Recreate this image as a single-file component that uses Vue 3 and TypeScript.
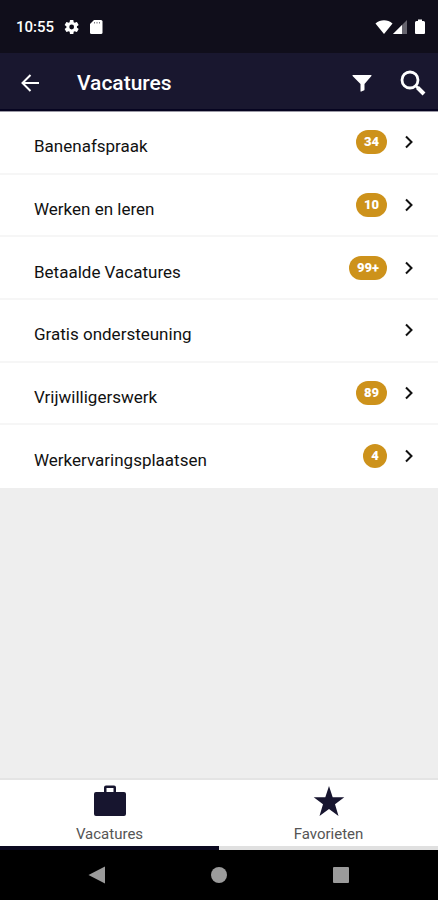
<script setup lang="ts">
import { ref } from 'vue'

interface Category {
  name: string
  count?: string
}

const categories: Category[] = [
  { name: 'Banenafspraak', count: '34' },
  { name: 'Werken en leren', count: '10' },
  { name: 'Betaalde Vacatures', count: '99+' },
  { name: 'Gratis ondersteuning' },
  { name: 'Vrijwilligerswerk', count: '89' },
  { name: 'Werkervaringsplaatsen', count: '4' },
]

const activeTab = ref<'vacatures' | 'favorieten'>('vacatures')
</script>

<template>
  <div class="screen">
    <div class="status">
      <span class="clock">10:55</span>
      <svg class="gear" width="16" height="16" viewBox="0 0 24 24">
        <path fill="currentColor" fill-rule="evenodd" d="M19.4 13a7.600 7.600 0 0 0 0-2l2.300-1.700a.6.6 0 0 0 .1-.7l-2.200-3.800a.6.6 0 0 0-.7-.2l-2.700 1.100a8 8 0 0 0-1.700-1l-.4-2.800a.6.6 0 0 0-.6-.5H9.500a.6.6 0 0 0-.6.500l-.4 2.800a8 8 0 0 0-1.700 1L4.100 4.600a.6.6 0 0 0-.7.2L1.200 8.600a.6.6 0 0 0 .1.700L3.600 11a7.600 7.600 0 0 0 0 2l-2.300 1.700a.6.6 0 0 0-.1.700l2.200 3.800c.1.200.4.300.7.200l2.700-1.100a8 8 0 0 0 1.700 1l.4 2.800c0 .3.300.5.6.500h4c.3 0 .6-.2.6-.5l.4-2.800a8 8 0 0 0 1.700-1l2.700 1.100c.3.100.6 0 .7-.2l2.200-3.800a.6.6 0 0 0-.1-.7zM11.500 15.600a3.600 3.600 0 1 1 0-7.200 3.600 3.600 0 0 1 0 7.200z" />
      </svg>
      <svg class="card" width="14" height="16" viewBox="0 0 14 16">
        <path fill="currentColor" d="M5 1h7a1.500 1.500 0 0 1 1.500 1.500v11A1.500 1.500 0 0 1 12 15H2.500A1.500 1.500 0 0 1 1 13.500V5z" />
        <path stroke="#77757c" stroke-width="1" d="M5.500 3v1.500M8 3v1.500M10.500 3v1.500" />
      </svg>
      <div class="signals">
        <svg width="18" height="16" viewBox="0 0 18 16">
          <path fill="currentColor" d="M9 15 .5 4.500C3 2.300 6 1.300 9 1.300s6 1 8.500 3.200z" />
        </svg>
        <svg width="15" height="16" viewBox="0 0 15 16">
          <path fill="#66646e" d="M14 1v14H0z" />
          <path fill="currentColor" d="M9 6v9H0z" />
        </svg>
        <svg class="battery" width="12" height="16" viewBox="0 0 12 16">
          <path fill="currentColor" d="M4 .5h4v1.500h1.500a1.500 1.500 0 0 1 1.500 1.500v10.500a1 1 0 0 1-1 1H2a1 1 0 0 1-1-1V3.500A1.500 1.500 0 0 1 2.500 2H4z" />
        </svg>
      </div>
    </div>

    <header class="appbar">
      <button class="icon-button" type="button" aria-label="Terug">
        <svg width="20" height="20" viewBox="0 0 20 20" fill="none" stroke="currentColor" stroke-width="2">
          <path d="M19 10H3M10.500 2 2.500 10l8 8" />
        </svg>
      </button>
      <h1>Vacatures</h1>
      <button class="icon-button filter" type="button" aria-label="Filter">
        <svg width="20" height="18" viewBox="0 0 20 18">
          <path fill="currentColor" d="M.8 1h18.400q.6.500.2 1L12.500 10v5.500q0 .8-.8 1.100l-2.400 1q-.8.200-.8-.6V10L.600 2q-.4-.5.2-1z" />
        </svg>
      </button>
      <button class="icon-button" type="button" aria-label="Zoeken">
        <svg width="26" height="26" viewBox="0 0 26 26" fill="none" stroke="currentColor">
          <circle cx="10" cy="10" r="8" stroke-width="2.800" />
          <path stroke-width="2.500" d="M15.500 15.500 18 18" />
          <path stroke-width="4" d="m17.500 17.500 6.500 6.500" />
        </svg>
      </button>
    </header>

    <main>
      <ul class="list">
        <li v-for="category in categories" :key="category.name">
          <a href="#" class="row" @click.prevent>
            <span class="name">{{ category.name }}</span>
            <span v-if="category.count" class="badge">{{ category.count }}</span>
            <svg class="chevron" width="10" height="14" viewBox="0 0 10 14" fill="none" stroke="currentColor" stroke-width="2">
              <path d="m2 1.500 5.500 5.500L2 12.500" />
            </svg>
          </a>
        </li>
      </ul>
    </main>

    <nav class="tabs">
      <button type="button" class="tab" :class="{ active: activeTab === 'vacatures' }" @click="activeTab = 'vacatures'">
        <svg width="34" height="34" viewBox="0 0 34 34">
          <path fill="currentColor" fill-rule="evenodd" d="M11 8V3.500A2 2 0 0 1 13 1.500h8a2 2 0 0 1 2 2V8h8a2 2 0 0 1 2 2v20a2 2 0 0 1-2 2H3a2 2 0 0 1-2-2V10a2 2 0 0 1 2-2zM13.500 8h7V4h-7z" />
        </svg>
        <span>Vacatures</span>
      </button>
      <button type="button" class="tab" :class="{ active: activeTab === 'favorieten' }" @click="activeTab = 'favorieten'">
        <svg width="34" height="34" viewBox="0 0 34 34">
          <path fill="currentColor" d="m17 2 3.700 11.300H32.300l-9.300 7L26.500 32 17 25 7.500 32l3.500-11.700-9.300-7h11.600z" />
        </svg>
        <span>Favorieten</span>
      </button>
    </nav>

    <div class="system">
      <button type="button" aria-label="Systeem terug">
        <svg width="20" height="20" viewBox="0 0 20 20"><path fill="currentColor" d="M18 1.500v17L1.500 10z" /></svg>
      </button>
      <button type="button" aria-label="Startscherm">
        <svg width="20" height="20" viewBox="0 0 20 20"><circle fill="currentColor" cx="10" cy="10" r="8" /></svg>
      </button>
      <button type="button" aria-label="Recente apps">
        <svg width="20" height="20" viewBox="0 0 20 20"><rect fill="currentColor" x="2" y="2" width="16" height="16" rx="1" /></svg>
      </button>
    </div>
  </div>
</template>

<style>
body {
  margin: 0;
}
</style>

<style scoped>
.screen {
  display: flex;
  flex-direction: column;
  min-height: 100vh;
  background: #eeeeee;
  color: #111111;
  font-family: Roboto, "Liberation Sans", sans-serif;
}

svg {
  display: block;
  flex: none;
}

button {
  margin: 0;
  padding: 0;
  border: 0;
  background: none;
  color: inherit;
  font: inherit;
  cursor: pointer;
}

.status {
  display: flex;
  align-items: center;
  height: 53px;
  padding: 0 12px 0 16px;
  background: #100e1b;
  color: #ffffff;
}

.clock {
  font-size: 15px;
  font-weight: 500;
  line-height: 20px;
}

.gear {
  margin-left: 10px;
}

.card {
  margin-left: 9px;
}

.signals {
  display: flex;
  margin-left: auto;
}

.battery {
  margin-left: 6px;
}

.appbar {
  display: flex;
  align-items: center;
  box-sizing: border-box;
  height: 58px;
  padding: 4px 12px 0 20px;
  border-bottom: 2px solid #060420;
  background: #19172f;
  color: #ffffff;
}

h1 {
  flex: 1;
  margin: 0 0 0 37px;
  font-size: 21px;
  font-weight: 500;
  line-height: 28px;
}

.filter {
  margin-right: 28px;
}

main {
  flex: 1;
  border-top: 1px solid #9b99a5;
}

.list {
  display: grid;
  grid-auto-rows: 1fr;
  min-height: 376px;
  margin: 0;
  padding: 0;
  background: #ffffff;
  list-style: none;
}

li {
  display: grid;
  border-bottom: 2px solid #f6f6f6;
}

li:last-child {
  border-bottom-color: transparent;
}

.row {
  display: flex;
  align-items: center;
  padding: 0 24px 0 34px;
  color: inherit;
  text-decoration: none;
}

.name {
  flex: 1;
  padding-top: 8px;
  font-size: 17px;
  line-height: 24px;
}

.badge {
  box-sizing: border-box;
  min-width: 24px;
  padding: 0 8px;
  border-radius: 12px;
  background: #cd921b;
  color: #ffffff;
  font-size: 13px;
  font-weight: 900;
  line-height: 24px;
  text-align: center;
}

.chevron {
  margin-left: 17px;
}

.tabs {
  display: grid;
  grid-template-columns: 1fr 1fr;
  border-top: 2px solid #e4e4e4;
  background: #ffffff;
}

.tab {
  display: flex;
  flex-direction: column;
  align-items: center;
  gap: 8px;
  padding: 4px 0;
  border-bottom: 4px solid #e0e0e0;
  color: #17152f;
}

.tab.active {
  border-bottom-color: #0b0920;
}

.tab span {
  color: #555555;
  font-size: 15px;
  line-height: 16px;
}

.system {
  display: flex;
  align-items: center;
  justify-content: center;
  gap: 102px;
  height: 50px;
  background: #000000;
  color: #9b9b9b;
}
</style>
